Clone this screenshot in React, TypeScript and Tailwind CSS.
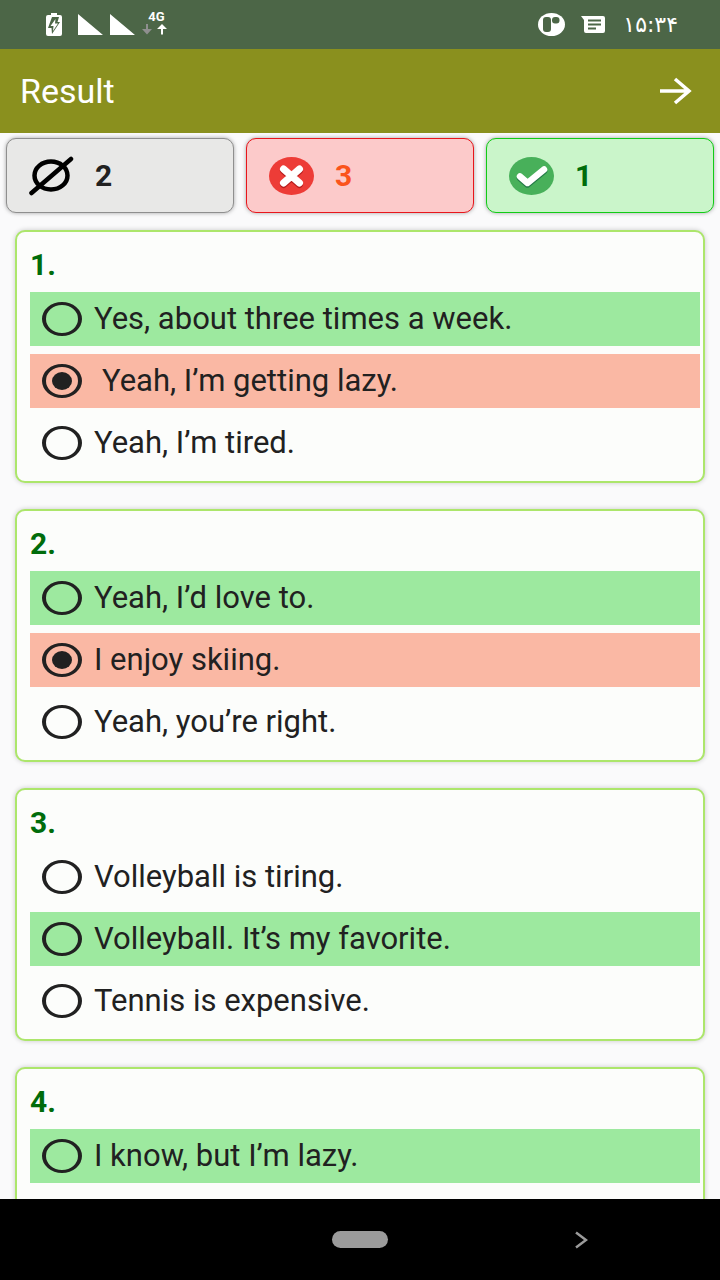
import React from 'react';
import clsx from 'clsx';

type Mark = 'correct' | 'wrong';

interface Option {
  text: string;
  mark?: Mark;
  selected?: boolean;
  indent?: boolean;
}

interface Question {
  id: number;
  options: Option[];
}

const questions: Question[] = [
  {
    id: 1,
    options: [
      { text: 'Yes, about three times a week.', mark: 'correct' },
      { text: 'Yeah, I’m getting lazy.', mark: 'wrong', selected: true, indent: true },
      { text: 'Yeah, I’m tired.' },
    ],
  },
  {
    id: 2,
    options: [
      { text: 'Yeah, I’d love to.', mark: 'correct' },
      { text: 'I enjoy skiing.', mark: 'wrong', selected: true },
      { text: 'Yeah, you’re right.' },
    ],
  },
  {
    id: 3,
    options: [
      { text: 'Volleyball is tiring.' },
      { text: 'Volleyball. It’s my favorite.', mark: 'correct' },
      { text: 'Tennis is expensive.' },
    ],
  },
  {
    id: 4,
    options: [{ text: 'I know, but I’m lazy.', mark: 'correct' }],
  },
];

function StatusBar() {
  return (
    <div className="flex h-[49px] shrink-0 items-center justify-between bg-[#4c6647] pl-[46px] pr-[42px] text-white">
      <div className="flex items-center">
        <svg width="16" height="23" viewBox="0 0 16 23" fill="currentColor">
          <path d="M5 0h6v2h3a2 2 0 0 1 2 2v17a2 2 0 0 1-2 2H2a2 2 0 0 1-2-2V4a2 2 0 0 1 2-2h3z" />
          <path d="M6 4h7l-1.500 5H14L6 21l-.5-6H2z" fill="#4c6647" />
          <path d="M9.500 6L4.500 13h3l-.5 5 5-7.500H9z" />
        </svg>
        <svg className="ml-4" width="57" height="21" viewBox="0 0 57 21" fill="currentColor">
          <path d="M0 0L25 21H0zM32 0L57 21H32z" />
        </svg>
        <div className="mb-1 ml-[7px] flex flex-col items-center gap-0.5">
          <span className="pl-1 text-[13px] font-bold leading-[11px]">4G</span>
          <svg width="25" height="11" viewBox="0 0 25 11">
            <path d="M4 0h2v5h4L5 10.500 0 5h4z" fill="#8f8f8f" />
            <path d="M19 10.500h2V5h4L20 0 15 5h4z" fill="#fff" />
          </svg>
        </div>
      </div>
      <div className="flex items-center">
        <svg width="27" height="23" viewBox="0 0 27 23">
          <ellipse cx="13.500" cy="11.500" rx="13.500" ry="11.500" fill="#fff" />
          <rect x="5" y="4" width="8" height="15" rx="3" fill="#4c6647" />
          <rect x="14" y="4" width="7.500" height="6.500" rx="3" fill="#4c6647" />
        </svg>
        <svg className="ml-4" width="24" height="17" viewBox="0 0 24 17">
          <path d="M0 0h22a2 2 0 0 1 2 2v13a2 2 0 0 1-2 2H5a2 2 0 0 1-2-2V4z" fill="#fff" />
          <path d="M7 4.500h13M7 8.500h13M7 12.500h8" stroke="#4c6647" strokeWidth="2" />
        </svg>
        <span className="ml-[18px] font-['DejaVu_Sans',sans-serif] text-[22px] leading-6">۱۵:۳۴</span>
      </div>
    </div>
  );
}

interface StatProps {
  label: string;
  value: number;
  className: string;
  children: React.ReactNode;
}

function Stat({ label, value, className, children }: StatProps) {
  return (
    <div
      aria-label={label}
      className={clsx(
        'flex h-[75px] flex-1 items-center gap-5 rounded-[10px] border pl-[22px] text-[30px] font-bold shadow-[0_0_4px_rgba(0,0,0,0.35)]',
        className
      )}
    >
      <svg width="46" height="40" viewBox="0 0 46 40">
        {children}
      </svg>
      <span>{value}</span>
    </div>
  );
}

function Stats() {
  return (
    <div className="flex shrink-0 gap-3 px-1.5 pt-[5px]">
      <Stat label="Unanswered" value={2} className="border-[#8f8f8f] bg-[#e8e8e7] text-[#212121]">
        <g fill="none" stroke="#000" strokeWidth="4.500">
          <ellipse cx="22" cy="19.500" rx="16.500" ry="14" />
          <path d="M2.500 37L42 3" strokeLinecap="round" />
        </g>
      </Stat>
      <Stat label="Wrong" value={3} className="border-[#e8161c] bg-[#fccaca] text-[#fa541c]">
        <ellipse cx="22.500" cy="20" rx="22.500" ry="19" fill="#ed3c37" />
        <path d="M14.500 14.500l16 14M30.500 14.500l-16 14" stroke="#b71c1c" strokeWidth="7" strokeLinecap="round" />
        <path d="M14.500 13l16 14M30.500 13l-16 14" stroke="#fff" strokeWidth="7" strokeLinecap="round" />
      </Stat>
      <Stat label="Correct" value={1} className="border-[#12cc16] bg-[#caf5ca] text-[#006c0b]">
        <ellipse cx="22.500" cy="20" rx="22.500" ry="19" fill="#48b05a" />
        <g fill="none" strokeWidth="6.500" strokeLinecap="round" strokeLinejoin="round">
          <path d="M11 22l7.500 6.500L35 15" stroke="#257a48" />
          <path d="M11 20.500l7.500 6.500L35 13.500" stroke="#fff" />
        </g>
      </Stat>
    </div>
  );
}

function OptionRow({ option, name }: { option: Option; name: string }) {
  return (
    <label
      className={clsx(
        'flex h-[54px] items-center gap-3 pl-3 text-[31px] leading-9 text-[#212121]',
        option.mark === 'correct' && 'bg-[#9de99f]',
        option.mark === 'wrong' && 'bg-[#fab8a4]'
      )}
    >
      <input
        type="radio"
        name={name}
        checked={!!option.selected}
        readOnly
        className="grid h-[34px] w-10 shrink-0 appearance-none place-content-center rounded-[50%] border-x-4 border-y-[3px] border-[#212121] before:h-[18px] before:w-5 before:rounded-[50%] checked:before:bg-[#212121]"
      />
      <span className={clsx(option.indent && 'pl-2')}>{option.text}</span>
    </label>
  );
}

function QuestionCard({ question }: { question: Question }) {
  return (
    <section className="min-h-[253px] shrink-0 rounded-[10px] border-2 border-[#ace66b] bg-[#fcfdfb] pb-[11px] pl-[13px] pr-[3px] shadow-[0_0_5px_rgba(0,0,0,0.2)]">
      <h2 className="flex h-[60px] items-center pt-1 text-[30px] font-bold text-[#006c0b]">{question.id}.</h2>
      <div className="flex flex-col gap-2">
        {question.options.map((option) => (
          <OptionRow key={option.text} option={option} name={`question-${question.id}`} />
        ))}
      </div>
    </section>
  );
}

export default function App() {
  return (
    <div className="flex h-screen flex-col bg-[#fafafb] font-[Roboto,sans-serif]">
      <StatusBar />
      <header className="flex h-[84px] shrink-0 items-center justify-between bg-[#8a901e] pl-5 pr-7 text-white">
        <h1 className="text-[34px] font-normal">Result</h1>
        <button type="button" aria-label="Next">
          <svg width="33" height="28" viewBox="0 0 33 28" fill="none" stroke="currentColor" strokeWidth="3.500">
            <path d="M1 14h29M16 2l14 12-14 12" />
          </svg>
        </button>
      </header>
      <Stats />
      <main className="flex min-h-0 flex-1 flex-col gap-[26px] overflow-y-auto px-[15px] pt-[17px] [scrollbar-width:none]">
        {questions.map((question) => (
          <QuestionCard key={question.id} question={question} />
        ))}
      </main>
      <nav className="grid h-[81px] shrink-0 grid-cols-3 items-center justify-items-center bg-black">
        <button type="button" aria-label="Home" className="col-start-2 h-[17px] w-14 rounded-full bg-[#9b9b9b]" />
        <button type="button" aria-label="Back" className="justify-self-start pl-[95px]">
          <svg width="13" height="18" viewBox="0 0 13 18" fill="none" stroke="#9b9b9b" strokeWidth="2.500">
            <path d="M1 1.500l10 7.500-10 7.500" />
          </svg>
        </button>
      </nav>
    </div>
  );
}
